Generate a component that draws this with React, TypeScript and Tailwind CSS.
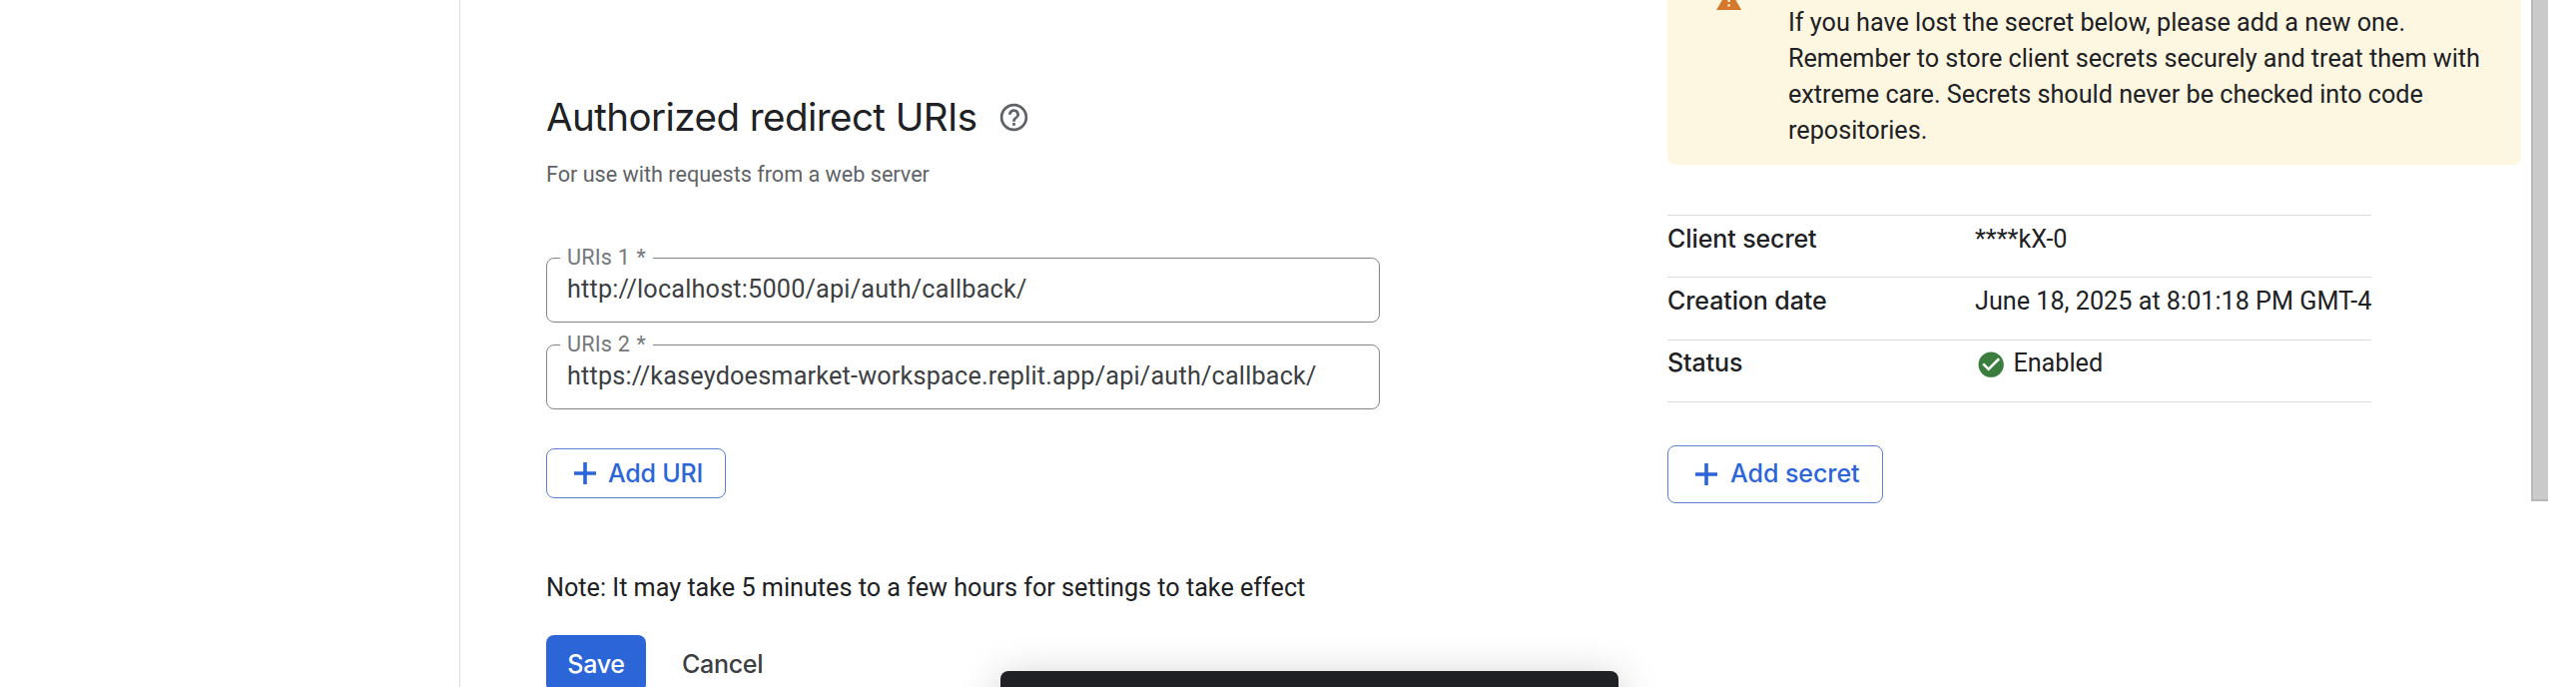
import type { ReactNode } from "react";
import { MdCheckCircle, MdHelpOutline, MdWarning } from "react-icons/md";

function PlusIcon() {
  return (
    <svg className="h-[22px] w-[22px] shrink-0" viewBox="0 0 22 22" fill="currentColor">
      <path d="M9.2 0h3.6v9.3H22v3.4h-9.2V22H9.2v-9.3H0V9.3h9.2z" />
    </svg>
  );
}

function UriField({ label, value }: { label: string; value: string }) {
  return (
    <div className="relative h-[65px] w-[835px] rounded-lg border border-[#80868b] pl-5 pt-[13px]">
      <label className="absolute left-[13px] top-[-14px] w-[93px] whitespace-nowrap bg-white pl-[7px] text-[21.6px] leading-[25px] tracking-[0.2px] text-[#75787c]">
        {label} <span className="ml-px">*</span>
      </label>
      <div className="text-[25.2px] leading-9 tracking-[0.2px] text-[#3c4043]">{value}</div>
    </div>
  );
}

function SecretRow({ name, className, children }: { name: string; className: string; children: ReactNode }) {
  return (
    <div className={`flex border-t border-[#dadce0] ${className}`}>
      <div className="w-[308px] shrink-0 font-['Inter',sans-serif] text-[25px] font-medium leading-9 tracking-[-0.1px]">
        {name}
      </div>
      <div className="flex whitespace-nowrap text-[25.2px] leading-[37px]">{children}</div>
    </div>
  );
}

export default function App() {
  return (
    <div className="relative flex h-[688px] w-[2580px] overflow-hidden bg-white font-['Roboto',sans-serif] text-[#202124]">
      <aside className="w-[461px] shrink-0 border-r border-[#dadce0]" />

      <main className="flex w-[1209px] shrink-0 flex-col items-start pl-[86px] pt-[93px]">
        <div className="flex h-12 shrink-0 items-center">
          <h1 className="w-[452px] whitespace-nowrap font-['Inter',sans-serif] text-[38.5px] leading-[48px] tracking-[-0.55px]">
            Authorized redirect URIs
          </h1>
          <MdHelpOutline className="h-[33px] w-[33px] text-[#5f6368]" />
        </div>
        <p className="mt-[19px] shrink-0 text-[21.6px] leading-[30px] text-[#5f6368]">
          For use with requests from a web server
        </p>

        <div className="mt-[68px] flex shrink-0 flex-col gap-[22px]">
          <UriField label="URIs 1" value="http://localhost:5000/api/auth/callback/" />
          <UriField label="URIs 2" value="https://kaseydoesmarket-workspace.replit.app/api/auth/callback/" />
        </div>

        <button className="mt-[39px] flex h-[50px] w-[180px] shrink-0 items-center gap-3 rounded-lg border border-[#5b80d0] pl-[27px] font-['Inter',sans-serif] text-[25px] font-medium leading-[30px] tracking-[-0.2px] text-[#2c65d8]">
          <PlusIcon />
          Add URI
        </button>

        <p className="mt-[72px] shrink-0 whitespace-nowrap text-[25.2px] leading-9">
          Note: It may take 5 minutes to a few hours for settings to take effect
        </p>

        <div className="mt-[29px] flex shrink-0 font-['Inter',sans-serif] text-[25px] font-medium leading-[30px] tracking-[-0.3px]">
          <button className="h-[57px] w-[100px] rounded-lg bg-[#2c65d8] text-white">Save</button>
          <button className="ml-9 h-[57px] text-[#3c4043]">Cancel</button>
        </div>
      </main>

      <section className="w-[865px] shrink-0">
        <div className="flex h-[165px] w-[855px] items-start rounded-b-lg bg-[#fdf6e0]">
          <MdWarning className="ml-12 mt-[-14px] h-[27.3px] w-[27.3px] shrink-0 text-[#d6782b]" />
          <p className="ml-[45.7px] mt-[-31px] whitespace-nowrap text-[25.2px] leading-9">
            Viewing and downloading client secrets is no longer available.
            <br />
            If you have lost the secret below, please add a new one.
            <br />
            Remember to store client secrets securely and treat them with
            <br />
            extreme care. Secrets should never be checked into code
            <br />
            repositories.
          </p>
        </div>

        <div className="mt-[50px] w-[705px] border-b border-[#dadce0]">
          <SecretRow name="Client secret" className="h-[62px] pt-[5px]">
            ****kX-0
          </SecretRow>
          <SecretRow name="Creation date" className="h-[63px] pt-[5px]">
            June 18, 2025 at 8:01:18 PM GMT-4
          </SecretRow>
          <SecretRow name="Status" className="h-[62px] pt-1">
            <MdCheckCircle className="ml-px mr-[7px] mt-[5px] h-[30.4px] w-[30.4px] text-[#3b7d3e]" />
            Enabled
          </SecretRow>
        </div>

        <button className="mt-[43px] flex h-[58px] w-[216px] items-center gap-[13px] rounded-lg border border-[#5b80d0] pl-[27px] font-['Inter',sans-serif] text-[25px] font-medium leading-[30px] tracking-[-0.05px] text-[#2c65d8]">
          <PlusIcon />
          <span className="mb-0.5">Add secret</span>
        </button>
      </section>

      <div className="h-[502px] w-[17px] shrink-0 border-b-2 border-l-2 border-[#b9b9b9] bg-[#cbcbcb]" />

      <div className="absolute left-[1002px] top-[672px] h-20 w-[619px] rounded-lg bg-[#202124] shadow-[0_8px_44px_rgba(0,0,0,0.22)]" />
    </div>
  );
}
